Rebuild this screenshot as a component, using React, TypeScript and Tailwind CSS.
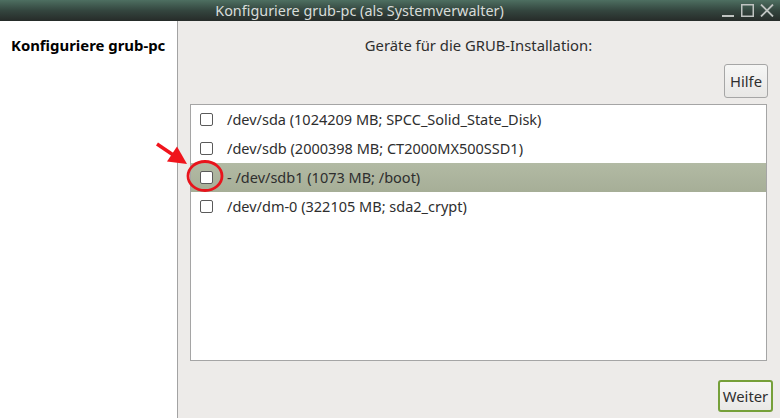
import React from "react";

const rows = [
  { label: "/dev/sda (1024209 MB; SPCC_Solid_State_Disk)", selected: false },
  { label: "/dev/sdb (2000398 MB; CT2000MX500SSD1)", selected: false },
  { label: "- /dev/sdb1 (1073 MB; /boot)", selected: true },
  { label: "/dev/dm-0 (322105 MB; sda2_crypt)", selected: false },
];

export default function App() {
  return (
    <div
      className="relative w-[780px] h-[418px] flex flex-col overflow-hidden text-[14px]"
      style={{ fontFamily: '"Noto Sans", "Open Sans", sans-serif' }}
    >
      {/* Title bar */}
      <div className="h-[21px] flex items-center bg-gradient-to-b from-[#4e6f61] via-[#34463f] to-[#262b29]">
        <div className="flex-1 text-center text-[#d8dcd9] text-[14.4px] leading-[21px]">
          Konfiguriere grub-pc (als Systemverwalter)
        </div>
        <div className="w-[61px] h-full flex items-center gap-[6px] pl-[3px]">
          <svg width="13" height="13" viewBox="0 0 13 13">
            <rect x="0" y="11" width="12" height="2" fill="#bfc3c1" />
          </svg>
          <svg width="13" height="13" viewBox="0 0 13 13">
            <rect x="0.75" y="0.75" width="11.5" height="11.5" fill="none" stroke="#bfc3c1" strokeWidth="1.5" />
          </svg>
          <svg width="14" height="13" viewBox="0 0 14 13">
            <path d="M1 0.5 L13 12.5 M13 0.5 L1 12.5" stroke="#bfc3c1" strokeWidth="1.8" />
          </svg>
        </div>
      </div>

      <div className="flex-1 flex">
        {/* Sidebar */}
        <div className="w-[178px] bg-white border-r border-[#a3a3a3] pl-[11px] pt-[14px]">
          <div className="font-bold text-black text-[14.9px] leading-[20px]">Konfiguriere grub-pc</div>
        </div>

        {/* Main */}
        <div className="flex-1 bg-[#edebe9] flex flex-col pl-[12px] pr-[13px] pt-[14px] pb-[6px]">
          <div className="text-center text-[#2e2e2e] text-[14.8px] leading-[20px]">Geräte für die GRUB-Installation:</div>
          <div className="flex justify-end mt-[9px] -mr-[1px]">
            <button className="h-[34px] w-[44px] rounded-[3px] border border-[#a6a6a6] bg-gradient-to-b from-[#f6f6f5] to-[#e8e7e5] text-[#2e2e2e] text-[14.8px]">
              Hilfe
            </button>
          </div>
          <div className="mt-[6px] h-[257px] bg-white border border-[#a5a5a5] pt-0">
            {rows.map((r, i) => (
              <div
                key={i}
                className={
                  "h-[29px] flex items-center pl-[9px] " +
                  (r.selected ? "bg-gradient-to-b from-[#b2baa4] to-[#a6ae97]" : "")
                }
              >
                <div className="w-[13px] h-[13px] border border-[#5a5a5a] rounded-[2px] bg-white" />
                <div className="ml-[14px] mb-[2px] text-[#2e2e2e] text-[14.5px] leading-[20px]">{r.label}</div>
              </div>
            ))}
          </div>
          <div className="flex-1 flex items-end justify-end -mr-[6px]">
            <button className="h-[32px] w-[55px] rounded-[3px] border-2 border-[#76a03a] bg-gradient-to-b from-[#f7f7f6] to-[#e9e8e6] text-[#2e2e2e] text-[14.8px]">
              Weiter
            </button>
          </div>
        </div>
      </div>

      {/* Red annotation overlay */}
      <svg className="absolute left-0 top-0 pointer-events-none" width="780" height="418">
        <ellipse cx="205" cy="176" rx="17" ry="14.5" fill="none" stroke="#e8141c" strokeWidth="2.8" />
        <line x1="157" y1="144" x2="174" y2="155.5" stroke="#f0141c" strokeWidth="3.5" />
        <polygon points="187,164 167,161.6 177,146.6" fill="#f0141c" />
      </svg>
    </div>
  );
}
